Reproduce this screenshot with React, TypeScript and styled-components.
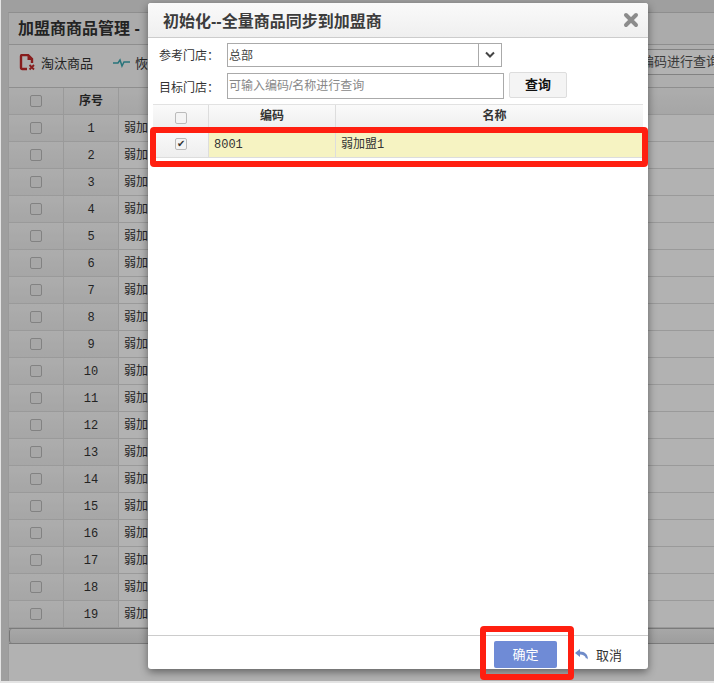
import styled, { createGlobalStyle } from "styled-components";

const rowNumbers = Array.from({ length: 19 }, (_, i) => i + 1);

const GlobalStyle = createGlobalStyle`
  html, body {
    margin: 0;
    padding: 0;
    background: #fff;
  }
  * {
    box-sizing: border-box;
  }
`;

const App = () => {
  return (
    <Page>
      <GlobalStyle />
      <Panel>
        <PageTitle>加盟商商品管理 -</PageTitle>
        <Toolbar>
          <ToolItem>
            <svg width="17" height="17" viewBox="0 0 17 17">
              <path
                d="M8 15H3.2A1.2 1.2 0 0 1 2 13.8V2.2A1.2 1.2 0 0 1 3.2 1H9l4 4v4"
                fill="none"
                stroke="#c22a2a"
                strokeWidth="2.4"
              />
              <path d="M8.5 1.5V6H13z" fill="#c22a2a" />
              <path d="M10.5 11l4.5 4.5M15 11l-4.5 4.5" stroke="#c22a2a" strokeWidth="1.8" />
            </svg>
            淘汰商品
          </ToolItem>
          <ToolItem>
            <svg width="17" height="17" viewBox="0 0 17 17">
              <path d="M0 9h5l2-3 2 6 2-4h6" fill="none" stroke="#3aa6b0" strokeWidth="1.5" />
            </svg>
            恢复商品
          </ToolItem>
          <SearchBox>可输入编码进行查询</SearchBox>
        </Toolbar>
        <GridHead>
          <CheckCell><Box /></CheckCell>
          <IndexCell $head>序号</IndexCell>
          <NameCell />
        </GridHead>
        {rowNumbers.map((n) => (
          <GridRow key={n}>
            <CheckCell><Box /></CheckCell>
            <IndexCell>{n}</IndexCell>
            <NameCell>弱加盟1</NameCell>
          </GridRow>
        ))}
        <ScrollTrack><ScrollThumb /></ScrollTrack>
      </Panel>

      <Mask />

      <Modal>
        <ModalHeader>
          <ModalTitle>初始化--全量商品同步到加盟商</ModalTitle>
          <CloseIcon viewBox="0 0 16 16">
            <path d="M3 3l10 10M13 3L3 13" stroke="#8c8c8c" strokeWidth="4" strokeLinecap="round" />
          </CloseIcon>
        </ModalHeader>
        <FormRow>
          <FormLabel $shift={-1}>参考门店：</FormLabel>
          <SelectBox>
            <SelectValue>总部</SelectValue>
            <SelectArrow>
              <svg width="12" height="8" viewBox="0 0 12 8">
                <path d="M2 1.5l4 4 4-4" fill="none" stroke="#444" strokeWidth="2" />
              </svg>
            </SelectArrow>
          </SelectBox>
        </FormRow>
        <FormRow>
          <FormLabel $shift={1}>目标门店：</FormLabel>
          <TextBox>可输入编码/名称进行查询</TextBox>
          <QueryButton>查询</QueryButton>
        </FormRow>
        <StoreTable>
          <StoreHead>
            <StoreCheck><ModalBox /></StoreCheck>
            <StoreCode $head>编码</StoreCode>
            <StoreName $head>名称</StoreName>
          </StoreHead>
          <StoreRow>
            <StoreCheck><ModalBox>✔</ModalBox></StoreCheck>
            <StoreCode>8001</StoreCode>
            <StoreName>弱加盟1</StoreName>
          </StoreRow>
        </StoreTable>
        <ModalFooter>
          <ConfirmButton>确定</ConfirmButton>
          <CancelLink>
            <svg width="16" height="14" viewBox="0 0 16 14">
              <path d="M6 1L1 5l5 4V6.5c3 0 5 1 6 4 .5-.5 1.5 0 2 1 0-5-3-8-8-8z" fill="#6f8bc9" />
            </svg>
            取消
          </CancelLink>
        </ModalFooter>
      </Modal>

      <Callout $x={150} $y={127} $w={498} $h={40} />
      <Callout $x={480} $y={626} $w={94} $h={54} />
    </Page>
  );
};

export default App;

const cjk = `"Liberation Sans", "Noto Sans CJK SC", sans-serif`;
const cellFont = `"Liberation Mono", "Noto Sans CJK SC", monospace`;

const Page = styled.div`
  position: relative;
  width: 714px;
  height: 683px;
  overflow: hidden;
  padding: 12px 0 2px 8px;
  background: #e4e4e4;
  font-family: ${cjk};
  font-size: 12px;
  color: #333;
`;

const Panel = styled.div`
  height: 100%;
  background: #fff;
  border-top: 1px solid #ccc;
  border-left: 1px solid #ddd;
`;

const PageTitle = styled.div`
  height: 32px;
  padding-left: 9px;
  background: #f5f5f5;
  border-bottom: 1px solid #ccc;
  font-size: 16px;
  font-weight: 700;
  line-height: 32px;
`;

const Toolbar = styled.div`
  display: flex;
  align-items: center;
  gap: 20px;
  height: 43px;
  padding: 0 0 8px 10px;
  background: #fafafa;
  border-bottom: 1px solid #ccc;
`;

const ToolItem = styled.div`
  display: flex;
  align-items: center;
  gap: 5px;
  font-size: 13px;
`;

const SearchBox = styled.div`
  flex: none;
  width: 300px;
  height: 26px;
  margin-left: auto;
  margin-right: -8px;
  padding-right: 2px;
  border: 1px solid #bbb;
  background: #fff;
  font-size: 13px;
  line-height: 24px;
  text-align: right;
  white-space: nowrap;
  overflow: hidden;
  color: #555;
`;

const GridHead = styled.div`
  display: flex;
  height: 27px;
  background: linear-gradient(#f8f8f8, #eee);
  border-bottom: 1px solid #ddd;
`;

const GridRow = styled(GridHead)`
  background: #fff;
`;

const CheckCell = styled.div`
  display: flex;
  align-items: center;
  justify-content: center;
  width: 55px;
  flex: none;
  padding-right: 1px;
  border-right: 1px solid #ddd;
  background: linear-gradient(#f8f8f8, #eee);
`;

const IndexCell = styled.div<{ $head?: boolean }>`
  width: 55px;
  flex: none;
  border-right: 1px solid #ddd;
  background: linear-gradient(#f8f8f8, #eee);
  font-family: ${cellFont};
  font-weight: ${(p) => (p.$head ? 700 : 400)};
  line-height: 28px;
  text-align: center;
`;

const NameCell = styled.div`
  flex: 1;
  padding-left: 5px;
  font-family: ${cellFont};
  line-height: 28px;
`;

const Box = styled.span`
  display: block;
  width: 12px;
  height: 12px;
  border: 1px solid #bbb;
  border-radius: 2px;
  background: #f0f0f0;
`;

const ScrollTrack = styled.div`
  height: 16px;
  background: #ddd;
  border-top: 1px solid #b0b0b0;
  border-bottom: 1px solid #b0b0b0;
`;

const ScrollThumb = styled.div`
  height: 100%;
  border-left: 1px solid #aaa;
  border-radius: 3px;
  background: linear-gradient(#f0f0f0, #e2e2e2);
`;

const Mask = styled.div`
  position: absolute;
  inset: 0 0 2px 1px;
  background: rgba(0, 0, 0, 0.3);
`;

const Modal = styled.div`
  position: absolute;
  left: 148px;
  top: 3px;
  display: flex;
  flex-direction: column;
  width: 500px;
  height: 666px;
  background: #fff;
  border-radius: 3px;
  box-shadow: 0 3px 9px rgba(0, 0, 0, 0.45);
`;

const ModalHeader = styled.div`
  display: flex;
  align-items: center;
  justify-content: space-between;
  height: 35px;
  padding: 0 9px 0 15px;
  background: linear-gradient(#fafafa, #efefef);
  border-bottom: 1px solid #ccc;
  border-radius: 3px 3px 0 0;
`;

const ModalTitle = styled.div`
  font-size: 16px;
  font-weight: 700;
  color: #3c3c3c;
`;

const CloseIcon = styled.svg`
  width: 16px;
  height: 16px;
`;

const FormRow = styled.div`
  display: flex;
  align-items: center;
  height: 26px;
  margin-top: 4px;
  padding-left: 11px;
`;

const FormLabel = styled.div<{ $shift: number }>`
  width: 68px;
  flex: none;
  margin-top: ${(p) => p.$shift * 2}px;
`;

const SelectBox = styled.div`
  display: flex;
  justify-content: space-between;
  width: 275px;
  height: 24px;
  padding-left: 1px;
  border: 1px solid #aaa;
`;

const SelectValue = styled.span`
  padding-top: 1px;
  line-height: 22px;
  color: #444;
`;

const SelectArrow = styled.span`
  display: flex;
  align-items: center;
  justify-content: center;
  width: 23px;
  border-left: 1px solid #aaa;
`;

const TextBox = styled.div`
  align-self: flex-start;
  width: 277px;
  height: 26px;
  margin-top: 1px;
  padding-left: 1px;
  border: 1px solid #aaa;
  line-height: 24px;
  color: #888;
`;

const QueryButton = styled.div`
  width: 58px;
  height: 26px;
  margin-left: 5px;
  border: 1px solid #ddd;
  border-radius: 2px;
  background: #f4f4f4;
  font-size: 13px;
  font-weight: 700;
  line-height: 24px;
  text-align: center;
  color: #111;
`;

const StoreTable = styled.div`
  flex: 1;
  margin: 6px 5px 0;
`;

const StoreHead = styled.div`
  display: flex;
  height: 27px;
  border-top: 1px solid #e2e2e2;
  border-bottom: 1px solid #ddd;
  background: linear-gradient(#fafafa, #eee);
`;

const StoreRow = styled(StoreHead)`
  border-top: 0;
  background: #f6f3c2;
`;

const StoreCheck = styled.div`
  display: flex;
  align-items: center;
  justify-content: center;
  width: 56px;
  flex: none;
  border-right: 1px solid #ddd;
  background: linear-gradient(#fafafa, #eee);
`;

const StoreCode = styled.div<{ $head?: boolean }>`
  width: 127px;
  flex: none;
  padding-left: ${(p) => (p.$head ? 0 : "5px")};
  border-right: 1px solid #ddd;
  font-family: ${cellFont};
  font-weight: ${(p) => (p.$head ? 700 : 400)};
  line-height: ${(p) => (p.$head ? 25 : 29)}px;
  text-align: ${(p) => (p.$head ? "center" : "left")};
`;

const StoreName = styled.div<{ $head?: boolean }>`
  flex: 1;
  padding-left: ${(p) => (p.$head ? "10px" : "5px")};
  font-family: ${cellFont};
  font-weight: ${(p) => (p.$head ? 700 : 400)};
  line-height: ${(p) => (p.$head ? 25 : 29)}px;
  text-align: ${(p) => (p.$head ? "center" : "left")};
`;

const ModalBox = styled.span`
  display: flex;
  align-items: center;
  justify-content: center;
  width: 12px;
  height: 12px;
  border: 1px solid #bbb;
  border-radius: 2px;
  background: #f4f4f4;
  color: #333;
  font-size: 10px;
  line-height: 1;
`;

const ModalFooter = styled.div`
  display: flex;
  align-items: center;
  gap: 17px;
  height: 34px;
  padding: 4px 0 0 346px;
  border-top: 1px solid #ccc;
`;

const ConfirmButton = styled.div`
  width: 63px;
  height: 27px;
  border-radius: 2px;
  background: #6f8bd6;
  color: #fff;
  font-size: 13px;
  line-height: 27px;
  text-align: center;
`;

const CancelLink = styled.div`
  display: flex;
  align-items: center;
  gap: 6px;
  font-size: 13px;
`;

const Callout = styled.div<{ $x: number; $y: number; $w: number; $h: number }>`
  position: absolute;
  left: ${(p) => p.$x}px;
  top: ${(p) => p.$y}px;
  width: ${(p) => p.$w}px;
  height: ${(p) => p.$h}px;
  border: 6px solid #ff1f10;
  border-radius: 4px;
`;
